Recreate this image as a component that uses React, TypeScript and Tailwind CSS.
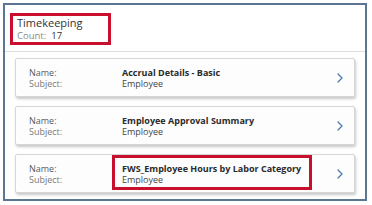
const rows = [
  { name: 'Accrual Details - Basic', subject: 'Employee', marked: false },
  { name: 'Employee Approval Summary', subject: 'Employee', marked: false },
  { name: 'FWS_Employee Hours by Labor Category', subject: 'Employee', marked: true },
];

function Chevron() {
  return (
    <svg width="6" height="10" viewBox="0 0 6 10" fill="none" className="shrink-0">
      <path d="M1 1l4 4-4 4" stroke="#4a78b0" strokeWidth="1.2" strokeLinecap="round" strokeLinejoin="round" />
    </svg>
  );
}

function ReportRow({ name, subject, marked }: { name: string; subject: string; marked: boolean }) {
  return (
    <div className="flex h-[39px] items-center rounded-[2px] border border-[#d6d6d6] bg-[#fdfdfd] pl-[13px] pr-[11px] shadow-[1px_2px_3px_rgba(0,0,0,0.22)]">
      <div className="w-[93px] shrink-0 text-[9px] leading-[11px]">
        <div className="text-[#5a5a5a]">Name:</div>
        <div className="text-[#7a7a7a]">Subject:</div>
      </div>
      <div className="relative flex-1 text-[9px] leading-[11px]">
        <div className="font-bold text-[#2b2b2b]">{name}</div>
        <div className="text-[#444]">{subject}</div>
        {marked && (
          <div className="absolute left-[-10px] top-[-8px] h-[35px] w-[200px] border-[3px] border-[#c8102e]" />
        )}
      </div>
      <Chevron />
    </div>
  );
}

export default function App() {
  return (
    <div className="h-[205px] w-[372px] bg-white p-[3px] font-['Open_Sans',sans-serif]">
      <div className="flex h-[198px] w-[364px] flex-col border-2 border-[#5b7593] bg-white">
        <div className="px-[5px] pt-[8px] pb-[6px]">
          <div className="w-[101px] border-[3px] border-[#c8102e] px-[4px]">
            <div className="text-[11px] leading-[14px] text-[#333]">Timekeeping</div>
            <div className="text-[9.5px] leading-[12px]">
              <span className="text-[#8a8a8a]">Count:</span>
              <span className="ml-[5px] text-[#333]">17</span>
            </div>
          </div>
        </div>
        <div className="h-px bg-[#dedede]" />
        <div className="flex flex-col gap-[9px] px-[10px] pt-[6px]">
          {rows.map((r) => (
            <ReportRow key={r.name} {...r} />
          ))}
        </div>
      </div>
    </div>
  );
}
